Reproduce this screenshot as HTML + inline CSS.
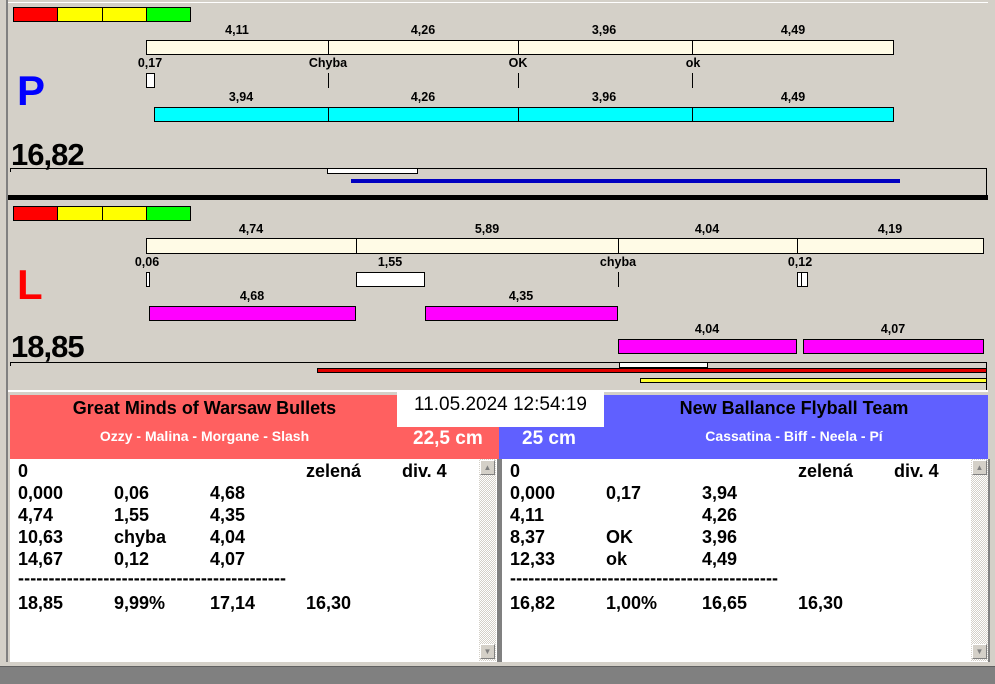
<!DOCTYPE html><html><head><meta charset="utf-8"><style>
body{margin:0;width:995px;height:684px;background:#d4d0c8;position:relative;overflow:hidden;font-family:"Liberation Sans",Arial,sans-serif}
div{position:absolute;box-sizing:border-box}
.l{font-size:12.5px;font-weight:bold;transform:translateX(-50%);white-space:nowrap;line-height:14px}
.b{border:1px solid #000}
.t{width:1px;background:#000}
.r{font-size:18px;font-weight:bold;line-height:22px;white-space:nowrap}
.sb{background:repeating-conic-gradient(#d4d0c8 0 25%,#fff 0 50%) 0 0/2px 2px;width:17px}
.btn{width:15px;height:15px;background:#d4d0c8;border:1px solid #fff;border-right-color:#808080;border-bottom-color:#808080;font-size:8px;color:#808080;text-align:center;line-height:13px}
</style></head><body>
<div style="left:0;top:0;width:8px;height:668px;border-right:2px solid #808080"></div>
<div style="left:8px;top:2px;width:980px;height:1px;background:#fff"></div>
<!-- top panel -->
<div class="b" style="left:13px;top:7px;width:45px;height:15px;background:#f00"></div>
<div class="b" style="left:57px;top:7px;width:46px;height:15px;background:#ff0"></div>
<div class="b" style="left:102px;top:7px;width:45px;height:15px;background:#ff0"></div>
<div class="b" style="left:146px;top:7px;width:45px;height:15px;background:#0f0"></div>
<div class="l" style="left:237px;top:23px">4,11</div><div class="l" style="left:423px;top:23px">4,26</div><div class="l" style="left:604px;top:23px">3,96</div><div class="l" style="left:793px;top:23px">4,49</div>
<div class="b" style="left:146px;top:40px;width:748px;height:15px;background:#fffbe6"></div>
<div class="t" style="left:328px;top:40px;height:15px"></div><div class="t" style="left:518px;top:40px;height:15px"></div><div class="t" style="left:692px;top:40px;height:15px"></div>
<div class="l" style="left:150px;top:56px">0,17</div><div class="l" style="left:328px;top:56px">Chyba</div><div class="l" style="left:518px;top:56px">OK</div><div class="l" style="left:693px;top:56px">ok</div>
<div class="b" style="left:146px;top:73px;width:9px;height:15px;background:#fff"></div>
<div class="t" style="left:328px;top:73px;height:15px"></div><div class="t" style="left:518px;top:73px;height:15px"></div><div class="t" style="left:692px;top:73px;height:15px"></div>
<div style="left:17px;top:68px;font-size:42px;font-weight:bold;color:#0000ff;line-height:46px">P</div>
<div class="l" style="left:241px;top:90px">3,94</div><div class="l" style="left:423px;top:90px">4,26</div><div class="l" style="left:604px;top:90px">3,96</div><div class="l" style="left:793px;top:90px">4,49</div>
<div class="b" style="left:154px;top:107px;width:740px;height:15px;background:#00ffff"></div>
<div class="t" style="left:328px;top:107px;height:15px"></div><div class="t" style="left:518px;top:107px;height:15px"></div><div class="t" style="left:692px;top:107px;height:15px"></div>
<div style="left:11px;top:137px;font-size:31px;font-weight:bold;line-height:36px;letter-spacing:-1px">16,82</div>
<div style="left:10px;top:168px;width:977px;height:1px;background:#000"></div>
<div class="t" style="left:10px;top:168px;height:4px"></div><div class="t" style="left:986px;top:168px;height:27px"></div>
<div class="b" style="left:327px;top:168px;width:91px;height:6px;background:#fff"></div>
<div style="left:351px;top:179px;width:549px;height:4px;background:#0000c0"></div>
<div style="left:8px;top:195px;width:980px;height:5px;background:#000"></div>
<!-- bottom panel -->
<div class="b" style="left:13px;top:206px;width:45px;height:15px;background:#f00"></div>
<div class="b" style="left:57px;top:206px;width:46px;height:15px;background:#ff0"></div>
<div class="b" style="left:102px;top:206px;width:45px;height:15px;background:#ff0"></div>
<div class="b" style="left:146px;top:206px;width:45px;height:15px;background:#0f0"></div>
<div class="l" style="left:251px;top:222px">4,74</div><div class="l" style="left:487px;top:222px">5,89</div><div class="l" style="left:707px;top:222px">4,04</div><div class="l" style="left:890px;top:222px">4,19</div>
<div class="b" style="left:146px;top:238px;width:838px;height:16px;background:#fffbe6"></div>
<div class="t" style="left:356px;top:238px;height:16px"></div><div class="t" style="left:618px;top:238px;height:16px"></div><div class="t" style="left:797px;top:238px;height:16px"></div>
<div class="l" style="left:147px;top:255px">0,06</div><div class="l" style="left:390px;top:255px">1,55</div><div class="l" style="left:618px;top:255px">chyba</div><div class="l" style="left:800px;top:255px">0,12</div>
<div class="b" style="left:146px;top:272px;width:4px;height:15px;background:#fff"></div>
<div class="b" style="left:356px;top:272px;width:69px;height:15px;background:#fff"></div>
<div class="t" style="left:618px;top:272px;height:15px"></div>
<div class="b" style="left:797px;top:272px;width:11px;height:15px;background:#fff"></div><div class="t" style="left:801px;top:272px;height:15px"></div>
<div style="left:17px;top:262px;font-size:42px;font-weight:bold;color:#f00;line-height:46px">L</div>
<div class="l" style="left:252px;top:289px">4,68</div><div class="l" style="left:521px;top:289px">4,35</div>
<div class="b" style="left:149px;top:306px;width:207px;height:15px;background:#ff00ff"></div>
<div class="b" style="left:425px;top:306px;width:193px;height:15px;background:#ff00ff"></div>
<div class="l" style="left:707px;top:322px">4,04</div><div class="l" style="left:893px;top:322px">4,07</div>
<div class="b" style="left:618px;top:339px;width:179px;height:15px;background:#ff00ff"></div>
<div class="b" style="left:803px;top:339px;width:181px;height:15px;background:#ff00ff"></div>
<div style="left:11px;top:329px;font-size:31px;font-weight:bold;line-height:36px;letter-spacing:-1px">18,85</div>
<div style="left:10px;top:362px;width:977px;height:1px;background:#000"></div>
<div class="t" style="left:10px;top:362px;height:4px"></div><div class="t" style="left:986px;top:362px;height:28px"></div>
<div class="b" style="left:619px;top:362px;width:89px;height:6px;background:#fff"></div>
<div class="b" style="left:317px;top:368px;width:670px;height:5px;background:#e00000"></div>
<div class="b" style="left:640px;top:378px;width:347px;height:5px;background:#ffff30"></div>
<div style="left:8px;top:390px;width:980px;height:2px;background:#fff"></div>
<!-- headers -->
<div style="left:10px;top:395px;width:489px;height:64px;background:#ff6060"></div>
<div style="left:499px;top:395px;width:489px;height:64px;background:#6060ff"></div>
<div style="left:397px;top:392px;width:207px;height:35px;background:#fff;font-size:19px;text-align:center;line-height:26px">11.05.2024 12:54:19</div>
<div style="left:10px;top:397px;width:389px;text-align:center;font-size:18px;font-weight:bold;line-height:22px">Great Minds of Warsaw Bullets</div>
<div style="left:10px;top:427px;width:389px;text-align:center;font-size:14px;font-weight:bold;color:#fff;line-height:18px">Ozzy - Malina - Morgane - Slash</div>
<div style="left:413px;top:428px;font-size:19px;font-weight:bold;color:#fff;line-height:22px">22,5 cm</div>
<div style="left:522px;top:428px;font-size:19px;font-weight:bold;color:#fff;line-height:22px">25 cm</div>
<div style="left:600px;top:397px;width:388px;text-align:center;font-size:18px;font-weight:bold;line-height:22px">New Ballance Flyball Team</div>
<div style="left:600px;top:427px;width:388px;text-align:center;font-size:14px;font-weight:bold;color:#fff;line-height:18px">Cassatina - Biff - Neela - Pí</div>
<!-- text boxes -->
<div style="left:10px;top:459px;width:487px;height:203px;background:#fff"></div>
<div class="sb" style="left:479px;top:459px;height:202px"></div>
<div class="btn" style="left:480px;top:460px">▲</div><div class="btn" style="left:480px;top:644px">▼</div>
<div style="left:497px;top:459px;width:5px;height:203px;background:#808080"></div>
<div style="left:502px;top:459px;width:486px;height:203px;background:#fff"></div>
<div class="sb" style="left:971px;top:459px;height:202px"></div>
<div class="btn" style="left:972px;top:460px">▲</div><div class="btn" style="left:972px;top:644px">▼</div>
<div style="left:988px;top:459px;width:2px;height:203px;background:#808080"></div>
<div style="left:0;top:662px;width:995px;height:5px;background:#d4d0c8"></div>
<div style="left:0;top:666px;width:995px;height:1px;background:#606060"></div>
<div style="left:0;top:667px;width:995px;height:17px;background:#808080"></div>

<div class="r" style="left:18px;top:460px">0</div><div class="r" style="left:306px;top:460px">zelená</div><div class="r" style="left:402px;top:460px">div. 4</div>
<div class="r" style="left:18px;top:482px">0,000</div><div class="r" style="left:114px;top:482px">0,06</div><div class="r" style="left:210px;top:482px">4,68</div>
<div class="r" style="left:18px;top:504px">4,74</div><div class="r" style="left:114px;top:504px">1,55</div><div class="r" style="left:210px;top:504px">4,35</div>
<div class="r" style="left:18px;top:526px">10,63</div><div class="r" style="left:114px;top:526px">chyba</div><div class="r" style="left:210px;top:526px">4,04</div>
<div class="r" style="left:18px;top:548px">14,67</div><div class="r" style="left:114px;top:548px">0,12</div><div class="r" style="left:210px;top:548px">4,07</div>
<div class="r" style="left:18px;top:567px;letter-spacing:0.1px">--------------------------------------------</div>
<div class="r" style="left:18px;top:592px">18,85</div><div class="r" style="left:114px;top:592px">9,99%</div><div class="r" style="left:210px;top:592px">17,14</div><div class="r" style="left:306px;top:592px">16,30</div>

<div class="r" style="left:510px;top:460px">0</div><div class="r" style="left:798px;top:460px">zelená</div><div class="r" style="left:894px;top:460px">div. 4</div>
<div class="r" style="left:510px;top:482px">0,000</div><div class="r" style="left:606px;top:482px">0,17</div><div class="r" style="left:702px;top:482px">3,94</div>
<div class="r" style="left:510px;top:504px">4,11</div><div class="r" style="left:702px;top:504px">4,26</div>
<div class="r" style="left:510px;top:526px">8,37</div><div class="r" style="left:606px;top:526px">OK</div><div class="r" style="left:702px;top:526px">3,96</div>
<div class="r" style="left:510px;top:548px">12,33</div><div class="r" style="left:606px;top:548px">ok</div><div class="r" style="left:702px;top:548px">4,49</div>
<div class="r" style="left:510px;top:567px;letter-spacing:0.1px">--------------------------------------------</div>
<div class="r" style="left:510px;top:592px">16,82</div><div class="r" style="left:606px;top:592px">1,00%</div><div class="r" style="left:702px;top:592px">16,65</div><div class="r" style="left:798px;top:592px">16,30</div>
</body></html>
